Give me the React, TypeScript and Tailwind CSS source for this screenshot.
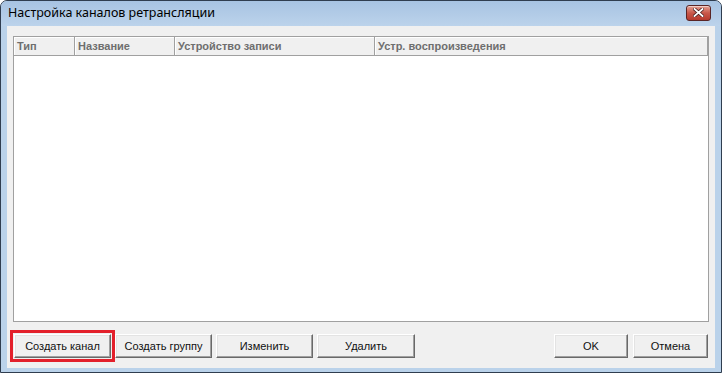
import React from 'react';

const columns = [
  { title: 'Тип', width: 'w-[61px]' },
  { title: 'Название', width: 'w-[100px]' },
  { title: 'Устройство записи', width: 'w-[200px]' },
  { title: 'Устр. воспроизведения', width: 'w-[333px]' },
];

const Btn = ({ text, width, highlighted }: { text: string; width: string; highlighted?: boolean }) => (
  <button
    className={`${width} h-[24px] bg-[#f0f0f0] border border-t-white border-l-white border-b-[#696969] border-r-[#696969] shadow-[inset_-1px_-1px_0_#a0a0a0,inset_1px_1px_0_#e3e3e3] text-[11px] text-[#111] flex items-center justify-center ${
      highlighted ? 'outline-[3px] outline-solid outline-[#e3202b] outline-offset-[1px]' : ''
    }`}
  >
    {text}
  </button>
);

const App = () => {
  return (
    <div className="w-[722px] h-[373px] bg-white" style={{ fontFamily: '"Liberation Sans", Arial, sans-serif' }}>
      <div className="w-[722px] h-[373px] rounded-t-[7px] border border-[#2f3d4f] bg-[#bad2ea] flex flex-col overflow-hidden">
        {/* title bar */}
        <div className="h-[25px] shrink-0 flex items-center justify-between pl-[7px] pr-[10px] bg-gradient-to-b from-[#a7c3e2] to-[#bcd3eb]">
          <span className="text-[12.5px] text-black" style={{ fontFamily: '"Noto Sans", sans-serif' }}>
            Настройка каналов ретрансляции
          </span>
          <div className="w-[25px] h-[16px] mt-[-2px] rounded-[3px] border border-[#5a2525] bg-gradient-to-b from-[#e4a194] via-[#c9584a] to-[#b63a2e] flex items-center justify-center shadow-[inset_0_1px_0_rgba(255,255,255,0.5)]">
            <svg width="11" height="9" viewBox="0 0 11 9">
              <path d="M1.5 1 L9.5 8 M9.5 1 L1.5 8" stroke="#4a2020" strokeWidth="3.4" strokeLinecap="square" />
              <path d="M1.5 1 L9.5 8 M9.5 1 L1.5 8" stroke="#ffffff" strokeWidth="1.8" strokeLinecap="square" />
            </svg>
          </div>
        </div>

        {/* client area */}
        <div className="mx-[6px] h-[342px] shrink-0 bg-[#f0f0f0] flex flex-col px-[6px] pt-[10px]">
          <div className="h-[286px] bg-white border border-[#a0a0a0] flex flex-col">
            <div className="h-[19px] flex bg-[#f0f0f0] border-b border-[#a0a0a0]">
              {columns.map((c) => (
                <div
                  key={c.title}
                  className={`${c.width} h-full flex items-center pl-[3px] border-r border-[#a0a0a0] shadow-[inset_1px_1px_0_#ffffff] text-[11px] font-bold text-[#6e6e6e]`}
                >
                  {c.title}
                </div>
              ))}
            </div>
          </div>

          <div className="mt-[12px] flex items-center pl-[1px] pr-[1px]">
            <div className="flex gap-[4px]">
              <Btn text="Создать канал" width="w-[97px]" highlighted />
              <Btn text="Создать группу" width="w-[97px]" />
              <Btn text="Изменить" width="w-[97px]" />
              <Btn text="Удалить" width="w-[98px]" />
            </div>
            <div className="ml-auto flex gap-[5px]">
              <Btn text="OK" width="w-[74px]" />
              <Btn text="Отмена" width="w-[75px]" />
            </div>
          </div>
        </div>
      </div>
    </div>
  );
};

export default App;
